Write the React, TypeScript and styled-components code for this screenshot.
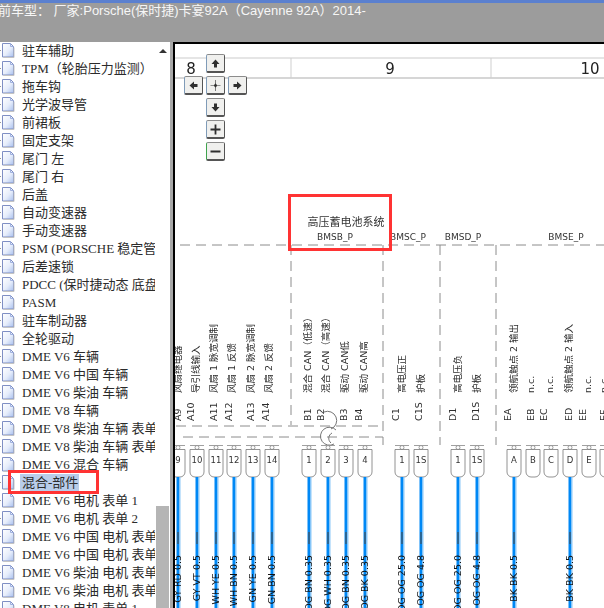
import React from "react";
import styled, { createGlobalStyle } from "styled-components";

const menuItems = [
  "驻车辅助",
  "TPM（轮胎压力监测）",
  "拖车钩",
  "光学波导管",
  "前裙板",
  "固定支架",
  "尾门 左",
  "尾门 右",
  "后盖",
  "自动变速器",
  "手动变速器",
  "PSM (PORSCHE 稳定管理系统)",
  "后差速锁",
  "PDCC (保时捷动态 底盘控制)",
  "PASM",
  "驻车制动器",
  "全轮驱动",
  "DME V6 车辆",
  "DME V6 中国 车辆",
  "DME V6 柴油 车辆",
  "DME V8 车辆",
  "DME V8 柴油 车辆 表单 1",
  "DME V8 柴油 车辆 表单 2",
  "DME V6 混合 车辆",
  "混合-部件",
  "DME V6 电机 表单 1",
  "DME V6 电机 表单 2",
  "DME V6 中国 电机 表单 1",
  "DME V6 中国 电机 表单 2",
  "DME V6 柴油 电机 表单 1",
  "DME V6 柴油 电机 表单 2",
  "DME V8 电机 表单 1",
];

type Pin = {
  x: number;
  pin: string;
  code: string;
  codeX: number;
  desc: string;
  descX: number;
  wire?: string;
};

const pins: Pin[] = [
  { x: 178, pin: "9", code: "A9", codeX: 177, desc: "风扇继电器", descX: 177, wire: "GY RD 0.5" },
  { x: 197, pin: "10", code: "A10", codeX: 190, desc: "导引线输入", descX: 195, wire: "GY VT 0.5" },
  { x: 216, pin: "11", code: "A11", codeX: 213, desc: "风扇 1 脉宽调制", descX: 213, wire: "WH YE 0.5" },
  { x: 234, pin: "12", code: "A12", codeX: 228, desc: "风扇 1 反馈", descX: 231, wire: "WH BN 0.5" },
  { x: 253, pin: "13", code: "A13", codeX: 250, desc: "风扇 2 脉宽调制", descX: 250, wire: "GN YE 0.5" },
  { x: 272, pin: "14", code: "A14", codeX: 265, desc: "风扇 2 反馈", descX: 268, wire: "GN BN 0.5" },
  { x: 309, pin: "1", code: "B1", codeX: 307, desc: "混合 CAN（低速）", descX: 307, wire: "OG BN 0.35" },
  { x: 328, pin: "2", code: "B2", codeX: 320, desc: "混合 CAN（高速）", descX: 325, wire: "OG WH 0.35" },
  { x: 346, pin: "3", code: "B3", codeX: 343, desc: "驱动 CAN低", descX: 344, wire: "OG BN 0.35" },
  { x: 365, pin: "4", code: "B4", codeX: 358, desc: "驱动 CAN高", descX: 363, wire: "OG BK 0.35" },
  { x: 402, pin: "1", code: "C1", codeX: 395, desc: "高电压正", descX: 401, wire: "OG OG 25.0" },
  { x: 421, pin: "1S", code: "C1S", codeX: 418, desc: "护板", descX: 420, wire: "OG OG 4.8" },
  { x: 458, pin: "1", code: "D1", codeX: 452, desc: "高电压负", descX: 457, wire: "OG OG 25.0" },
  { x: 477, pin: "1S", code: "D1S", codeX: 475, desc: "护板", descX: 476, wire: "OG OG 4.8" },
  { x: 514, pin: "A", code: "EA", codeX: 507, desc: "领航触点 2 输出", descX: 513, wire: "BK BK 0.5" },
  { x: 533, pin: "B", code: "EB", codeX: 530, desc: "n.c.", descX: 530 },
  { x: 551, pin: "C", code: "EC", codeX: 543, desc: "n.c.", descX: 549 },
  { x: 570, pin: "D", code: "ED", codeX: 568, desc: "领航触点 2 输入", descX: 568, wire: "BK BK 0.5" },
  { x: 589, pin: "E", code: "EE", codeX: 582, desc: "n.c.", descX: 587 },
  { x: 607, pin: "F", code: "EF", codeX: 603, desc: "n.c.", descX: 603 },
];

const headers = [
  { x: 335, label: "BMSB_P" },
  { x: 408, label: "BMSC_P" },
  { x: 463, label: "BMSD_P" },
  { x: 566, label: "BMSE_P" },
];

function PageIcon() {
  return (
    <IconSvg viewBox="0 0 16 16">
      <defs>
        <linearGradient id="page" x1="0" y1="0" x2="1" y2="1">
          <stop offset="0" stopColor="#ffffff" />
          <stop offset="0.55" stopColor="#e6edfb" />
          <stop offset="1" stopColor="#a9c0ee" />
        </linearGradient>
      </defs>
      <path d="M0 8.5h3" stroke="#9a9a9a" strokeDasharray="1 1" />
      <path d="M2.5 1.5h8l3 3v10.5h-11z" fill="url(#page)" stroke="#7f8fc4" />
      <path d="M10.5 1.5v3h3" fill="none" stroke="#9fb0de" />
      <path d="M3.5 15.5h10.5v-10" fill="none" stroke="#c4c4c4" />
    </IconSvg>
  );
}

function RotatedText(props: { x: number; y: number; anchor: string; size: number; fill?: string; children: string }) {
  return (
    <text
      transform={`translate(${props.x} ${props.y}) rotate(-90)`}
      textAnchor={props.anchor}
      fontSize={props.size}
      fill={props.fill ?? "#2e2e2e"}
    >
      {props.children}
    </text>
  );
}

function Schematic() {
  return (
    <DiagramSvg viewBox="175 44 429 564">
      {/* ruler */}
      <line x1="175" y1="58" x2="604" y2="58" stroke="#dcdcdc" strokeWidth="1.6" />
      <line x1="175" y1="78" x2="604" y2="78" stroke="#c8c8c8" strokeWidth="1.6" />
      <line x1="291" y1="58" x2="291" y2="78" stroke="#cfcfcf" />
      <line x1="491" y1="58" x2="491" y2="78" stroke="#cfcfcf" />
      <text x="191" y="74" fontSize="15" textAnchor="middle" fill="#222">8</text>
      <text x="390" y="74" fontSize="15" textAnchor="middle" fill="#222">9</text>
      <text x="590" y="74" fontSize="15" textAnchor="middle" fill="#222">10</text>

      {/* component frame */}
      <g stroke="#8c8c8c" strokeWidth="1" strokeDasharray="10 6" fill="none">
        <path d="M180 245H604" />
        <path d="M291 245V425" />
        <path d="M383 245V445" />
        <path d="M440 245V445" />
        <path d="M496 245V445" />
        <path d="M176 426H383" />
        <path d="M183 437H383" />
      </g>
      <g fill="none" stroke="#666" strokeWidth="0.9">
        <path d="M324 412a9 9 0 1 1 7 17" />
        <path d="M336 430a9 9 0 1 0 -2 14" />
        <path d="M332 433a6 6 0 0 0 -1 10" />
      </g>

      <text x="346" y="226" fontSize="11" textAnchor="middle" fill="#333">高压蓄电池系统</text>
      {headers.map((h) => (
        <text key={h.label} x={h.x} y="240" fontSize="9" textAnchor="middle" fill="#333">
          {h.label}
        </text>
      ))}

      {pins.map((p) => (
        <g key={p.code}>
          <RotatedText x={p.codeX + 4} y={421} anchor="start" size={9.5}>{p.code}</RotatedText>
          <RotatedText x={p.descX + 4} y={393} anchor="start" size={9.5}>{p.desc}</RotatedText>
          <path d={`M${p.x - 7} 445.5H${p.x + 7}`} stroke="#888" strokeWidth="0.8" />
          <circle cx={p.x} cy="447.5" r="2" fill="#fff" stroke="#888" strokeWidth="0.8" />
          <path
            d={`M${p.x - 7} 449.5H${p.x + 7}V472a5 5 0 0 1 -5 5H${p.x - 2}a5 5 0 0 1 -5 -5z`}
            fill="#fff"
            stroke="#777"
            strokeWidth="0.8"
          />
          <text x={p.x} y="463" fontSize="8.5" textAnchor="middle" fill="#333">{p.pin}</text>
          {p.wire && (
            <>
              <rect x={p.x - 1.5} y="477" width="3" height="131" fill="#0088f5" />
              <rect x={p.x + 1.5} y="477" width="1" height="131" fill="#8cc8f8" />
              <rect x={p.x - 1} y="532" width="2" height="12" fill="#2a6594" />
              <RotatedText x={p.x + 2.5} y={555} anchor="end" size={9.5} fill="#111">{p.wire}</RotatedText>
            </>
          )}
        </g>
      ))}
    </DiagramSvg>
  );
}

function NavIcon({ d }: { d: string }) {
  return (
    <svg width="13" height="13" viewBox="0 0 13 13">
      <path d={d} fill="#2f2f2f" />
    </svg>
  );
}

export default function App() {
  return (
    <>
      <GlobalStyle />
      <Page>
        <TitleBar>
          <TitleText>前车型： 厂家:Porsche(保时捷)卡宴92A（Cayenne 92A）2014-</TitleText>
        </TitleBar>
        <Body>
          <Sidebar>
            <MenuList>
              {menuItems.map((item) => (
                <MenuRow key={item}>
                  <PageIcon />
                  <MenuLabel $selected={item === "混合-部件"}>{item}</MenuLabel>
                </MenuRow>
              ))}
              <ListMark />
            </MenuList>
            <Scrollbar>
              <ScrollArrow />
              <ScrollThumb />
            </Scrollbar>
          </Sidebar>
          <Splitter />
          <Canvas>
            <Schematic />
            <SelectionBox />
            <NavPad>
              <NavButton $col={2} $row={1}><NavIcon d="M6.5 2.5 10.5 7H8V10.5H5V7H2.5z" /></NavButton>
              <NavButton $col={1} $row={2}><NavIcon d="M2.5 6.5 7 2.5V5H10.5V8H7V10.5z" /></NavButton>
              <NavButton $col={2} $row={2}><NavIcon d="M6.2 1h.6v3.6L8 6.2h3.5v.6H8L6.8 8.4V12h-.6V8.4L5 6.8H1.5v-.6H5L6.2 4.6z" /></NavButton>
              <NavButton $col={3} $row={2}><NavIcon d="M10.5 6.5 6 2.5V5H2.5V8H6V10.5z" /></NavButton>
              <NavButton $col={2} $row={3}><NavIcon d="M6.5 10.5 10.5 6H8V2.5H5V6H2.5z" /></NavButton>
              <NavButton $col={2} $row={4}><NavIcon d="M5.6 1.5h1.8v4.1h4.1v1.8H7.4v4.1H5.6V7.4H1.5V5.6h4.1z" /></NavButton>
              <NavButton $col={2} $row={5} $minus><NavIcon d="M1.5 5.5h10v2h-10z" /></NavButton>
            </NavPad>
          </Canvas>
        </Body>
      </Page>
    </>
  );
}

const GlobalStyle = createGlobalStyle`
  html, body {
    margin: 0;
    padding: 0;
    background: #fff;
  }
`;

const Page = styled.div`
  width: 604px;
  height: 608px;
  display: flex;
  flex-direction: column;
  overflow: hidden;
  font-family: "Liberation Serif", "Noto Sans CJK SC", serif;
`;

const TitleBar = styled.div`
  height: 39px;
  flex: none;
  background: #9c9c9c;
  border-top: 3px solid #5b80cf;
`;

const TitleText = styled.div`
  margin-left: -2px;
  font-family: "Liberation Sans", "Noto Sans CJK SC", sans-serif;
  font-size: 13px;
  line-height: 16px;
  color: #f6f6f6;
  white-space: nowrap;
`;

const Body = styled.div`
  flex: 1;
  display: flex;
  min-height: 0;
`;

const Sidebar = styled.div`
  width: 170px;
  flex: none;
  display: flex;
  background: #fff;
`;

const MenuList = styled.div`
  position: relative;
  width: 155px;
  flex: none;
  margin-top: -1px;
  overflow: hidden;
`;

const MenuRow = styled.div`
  height: 18px;
  display: flex;
  align-items: center;
  gap: 4px;
  white-space: nowrap;
`;

const IconSvg = styled.svg`
  width: 16px;
  height: 16px;
  flex: none;
`;

const MenuLabel = styled.span<{ $selected?: boolean }>`
  font-size: 13px;
  line-height: 17px;
  padding: 0 1px 0 2px;
  color: #2b2b2b;
  background: ${(p) => (p.$selected ? "#b9cdea" : "transparent")};
`;

const ListMark = styled.div`
  position: absolute;
  left: 8px;
  top: 429px;
  width: 91px;
  height: 24px;
  box-sizing: border-box;
  border: 3px solid #ff3333;
`;

const Scrollbar = styled.div`
  width: 15px;
  flex: none;
  display: flex;
  flex-direction: column;
  align-items: center;
`;

const ScrollArrow = styled.div`
  margin-top: 7px;
  width: 0;
  height: 0;
  border-left: 4px solid transparent;
  border-right: 4px solid transparent;
  border-bottom: 4px solid #333;
`;

const ScrollThumb = styled.div`
  margin-top: auto;
  width: 13px;
  height: 102px;
  background: #b5b5b5;
`;

const Splitter = styled.div`
  width: 3px;
  flex: none;
  background: #a8a8a8;
`;

const Canvas = styled.div`
  position: relative;
  flex: 1;
  min-width: 0;
  background: #fff;
  border-left: 2px solid #000;
  border-top: 2px solid #000;
  overflow: hidden;
`;

const DiagramSvg = styled.svg`
  display: block;
  width: 429px;
  height: 564px;
  filter: blur(0.3px);
  font-family: "DejaVu Sans", "Noto Sans CJK SC", sans-serif;
`;

const SelectionBox = styled.div`
  position: absolute;
  left: 113px;
  top: 150px;
  width: 104px;
  height: 57px;
  box-sizing: border-box;
  border: 3px solid #ff3333;
`;

const NavPad = styled.div`
  position: absolute;
  left: 9px;
  top: 10px;
  display: grid;
  grid-template-columns: repeat(3, 19px);
  grid-auto-rows: 19px;
  gap: 3px;
`;

const NavButton = styled.div<{ $col: number; $row: number; $minus?: boolean }>`
  grid-column: ${(p) => p.$col};
  grid-row: ${(p) => p.$row};
  box-sizing: border-box;
  display: flex;
  align-items: center;
  justify-content: center;
  background: #f0f0ee;
  border: 1px solid #8c8c8c;
  border-right-color: #555;
  border-bottom: 2px solid #555;
  border-left-color: ${(p) => (p.$minus ? "#3fa34d" : "#7f9bb8")};
  border-radius: 2px;
`;
